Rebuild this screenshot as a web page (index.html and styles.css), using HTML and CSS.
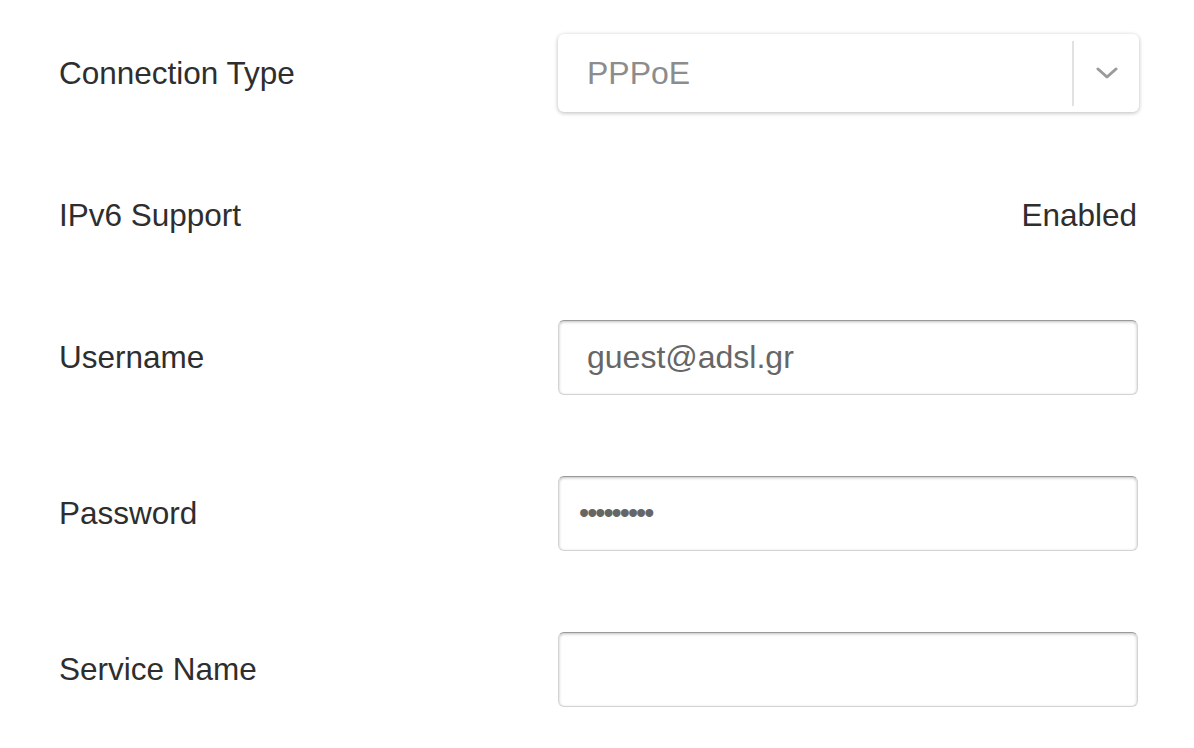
FILE: index.html
```html
<!DOCTYPE html>
<html lang="en">
<head>
  <meta charset="UTF-8" />
  <meta name="viewport" content="width=device-width, initial-scale=1" />
  <title>WAN Settings</title>
  <link rel="stylesheet" href="styles.css">
</head>
<body>

<div class="settings">

  <!-- Connection type -->
  <div class="row row-select">
    <label class="label">Connection Type</label>
    <div class="select">
      <span class="select-value">PPPoE</span>
      <span class="select-arrow">
        <svg width="22" height="12" viewBox="0 0 22 12">
          <path d="M2 2 L11 10 L20 2" fill="none" stroke="#9a9a9a" stroke-width="3" stroke-linecap="round" stroke-linejoin="round"/>
        </svg>
      </span>
    </div>
  </div>

  <div class="row row-info">
    <span class="label">IPv6 Support</span>
    <span class="value">Enabled</span>
  </div>

  <div class="row row-input first-input">
    <label class="label" for="username">Username</label>
    <input class="field" type="text" id="username" value="guest@adsl.gr" />
  </div>

  <div class="row row-input">
    <label class="label" for="password">Password</label>
    <input class="field field-password" type="password" id="password" value="123456789" />
  </div>

  <div class="row row-input">
    <label class="label" for="service">Service Name</label>
    <input class="field" type="text" id="service" value="" />
  </div>

</div>

</body>
</html>
```

FILE: styles.css
```css
:root {
  --text: #2e2e2e;
  --field-text: #666;
  --muted: #8c8c8c;
  --border: #d4d4d4;
}

* {
  box-sizing: border-box;
}

body {
  margin: 0;
  background: #fff;
  font-family: "Liberation Sans", Arial, Helvetica, sans-serif;
  color: var(--text);
}

.settings {
  padding: 0 56px 0 59px;
  display: flex;
  flex-direction: column;
}

.row {
  display: flex;
  align-items: center;
  justify-content: space-between;
}

.label {
  font-size: 31.5px;
  color: var(--text);
}

.row-select {
  margin-top: 34px;
  height: 78px;
}

.row-info {
  margin-top: 64px;
  height: 78px;
}

.row-input {
  margin-top: 81px;
  height: 75px;
}

.row-input.first-input {
  margin-top: 66px;
}

.value {
  font-size: 31.5px;
  margin-right: 1px;
}

/* dropdown */
.select {
  width: 581px;
  height: 78px;
  border-radius: 6px;
  background: #fff;
  box-shadow: 0 1px 4px rgba(0, 0, 0, 0.28);
  display: flex;
  align-items: center;
  margin-right: -1px;
}

.select-value {
  flex: 1;
  padding-left: 29px;
  font-size: 32px;
  color: var(--muted);
}

.select-arrow {
  width: 67px;
  height: 65px;
  border-left: 2px solid #e2e2e2;
  display: flex;
  align-items: center;
  justify-content: center;
}

.select-arrow svg {
  display: block;
  margin-left: 1px;
}

/* text fields */
.field {
  width: 580px;
  height: 75px;
  border: 1px solid var(--border);
  border-top-color: #9a9a9a;
  border-radius: 6px;
  box-shadow: inset 0 1px 3px rgba(0, 0, 0, 0.25);
  padding: 0 28px;
  font-family: inherit;
  font-size: 32px;
  color: var(--field-text);
  background: #fff;
  outline: none;
}

.field-password {
  padding-left: 20px;
  font-size: 29px;
  letter-spacing: -2px;
}
```
